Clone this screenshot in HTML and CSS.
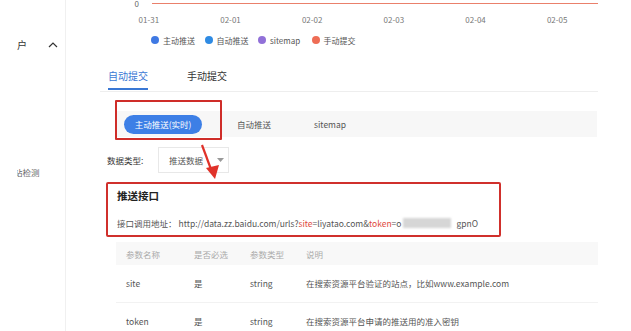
FILE: index.html
```html
<!DOCTYPE html>
<html lang="zh">
<head>
<meta charset="utf-8">
<link rel="stylesheet" href="styles.css">
</head>
<body>
<div class="app">
  <aside class="sidebar">
    <div class="nav-group">
      <span class="nav-title">户</span>
      <svg class="chev" width="10" height="6" viewBox="0 0 10 6"><polyline points="1,5 5,1 9,5" fill="none" stroke="#333" stroke-width="1.2"/></svg>
    </div>
    <div class="nav-item"><span class="clip"><span class="clip-inner">站检测</span></span></div>
  </aside>
  <main class="main">
    <section class="chart">
      <div class="chart-top">
        <span class="y-label">0</span>
        <span class="series-line"></span>
      </div>
      <div class="x-axis">
        <span>01-31</span><span>02-01</span><span>02-02</span><span>02-03</span><span>02-04</span><span>02-05</span>
      </div>
      <div class="legend">
        <span class="lg"><i class="dot d1"></i>主动推送</span>
        <span class="lg"><i class="dot d2"></i>自动推送</span>
        <span class="lg"><i class="dot d3"></i>sitemap</span>
        <span class="lg"><i class="dot d4"></i>手动提交</span>
      </div>
    </section>

    <nav class="tabs">
      <span class="tab active">自动提交</span>
      <span class="tab">手动提交</span>
    </nav>

    <div class="subtabs">
      <span class="pill">主动推送(实时)</span>
      <span class="sub sub2">自动推送</span>
      <span class="sub sub3">sitemap</span>
      <span class="mark-box"></span>
    </div>

    <div class="filter">
      <span class="filter-label">数据类型:</span>
      <span class="select">推送数据<svg class="caret" width="7" height="4" viewBox="0 0 7 4"><polygon points="0,0 7,0 3.5,4" fill="#999"/></svg></span>
      <svg class="arrow" width="24" height="40" viewBox="0 0 24 40"><line x1="2" y1="1" x2="12" y2="28" stroke="#e0322a" stroke-width="2.2"/><polygon points="6,24 19,21 15,35" fill="#e0322a"/></svg>
    </div>

    <section class="api-box">
      <h3 class="api-title">推送接口</h3>
      <p class="api-url">接口调用地址：<span class="url">http://data.zz.baidu.com/urls?<em>site</em>=liyatao.com&amp;<em>token</em>=o<span class="blur"></span>gpnO</span></p>
    </section>

    <table class="params">
      <thead>
        <tr><th>参数名称</th><th>是否必选</th><th>参数类型</th><th>说明</th></tr>
      </thead>
      <tbody>
        <tr><td>site</td><td>是</td><td>string</td><td>在搜索资源平台验证的站点，比如www.example.com</td></tr>
        <tr><td>token</td><td>是</td><td>string</td><td>在搜索资源平台申请的推送用的准入密钥</td></tr>
      </tbody>
    </table>
  </main>
</div>
</body>
</html>
```

FILE: styles.css
```css
* { box-sizing: border-box; }
html, body { margin: 0; padding: 0; background: #fff; }
body {
  font-family: "Noto Sans CJK SC", "Noto Sans", sans-serif;
  color: #333;
  width: 631px;
  height: 331px;
  overflow: hidden;
}
.app { display: flex; height: 331px; }

.sidebar {
  width: 66px;
  flex: none;
  border-right: 1px solid #f0f0f0;
  display: flex;
  flex-direction: column;
}
.nav-group {
  margin-top: 38px;
  height: 14px;
  display: flex;
  align-items: center;
  padding-left: 17px;
}
.nav-title { font-size: 10px; line-height: 14px; color: #333; }
.chev { margin-left: 21px; }
.nav-item { margin-top: 108px; padding-left: 17px; height: 14px; }
.clip { display: inline-block; width: 27px; overflow: hidden; white-space: nowrap; font-size: 8.5px; line-height: 14px; color: #666; }
.clip-inner { display: inline-block; margin-left: -3px; }

.main { flex: 1; padding: 0 33px 0 34px; min-width: 0; }

.chart { height: 52px; }
.chart-top { display: flex; align-items: center; height: 7px; }
.y-label { width: 52px; text-align: right; padding-right: 13px; font-size: 8px; line-height: 8px; color: #666; }
.series-line { flex: 1; height: 1px; background: #ea806b; }
.x-axis { display: flex; margin-left: 8px; margin-top: 7px; height: 12px; }
.x-axis span { width: 87px; text-align: center; font-size: 8px; line-height: 12px; color: #777; }
.legend { display: flex; margin-left: 51px; margin-top: 8px; height: 12px; align-items: center; }
.lg { display: inline-flex; align-items: center; font-size: 8px; color: #555; width: 53.5px; }
.dot { width: 8px; height: 8px; border-radius: 50%; margin-right: 4px; flex: none; }
.d1 { background: #3f79e3; }
.d2 { background: #2f8be3; }
.d3 { background: #9170d8; }
.d4 { background: #ee6d55; }

.tabs {
  margin-top: 17px;
  display: flex;
  padding-left: 8px;
  padding-bottom: 1px;
  border-bottom: 1px solid #eeeeee;
}
.tab { font-size: 10px; line-height: 14px; padding-bottom: 5px; border-bottom: 2px solid transparent; color: #333; }
.tab + .tab { margin-left: 39px; }
.tab.active { color: #3a78d4; border-bottom-color: #3a78d4; }

.subtabs {
  position: relative;
  margin: 19px 1px 0 15px;
  height: 26px;
  background: #f7f7f7;
  display: flex;
  align-items: center;
  padding-left: 9px;
}
.pill {
  height: 19px;
  width: 78px;
  border-radius: 10px;
  background: #3d7fe6;
  color: #fff;
  font-size: 8.5px;
  line-height: 19px;
  text-align: center;
}
.sub { font-size: 8.5px; color: #555; }
.sub2 { margin-left: 35px; }
.sub3 { margin-left: 43px; }
.mark-box {
  position: absolute;
  left: 0;
  top: -11px;
  width: 107px;
  height: 40px;
  border: 2px solid #cf2d29;
  border-radius: 1px;
}

.filter {
  position: relative;
  margin-top: 10px;
  height: 26px;
  display: flex;
  align-items: center;
  padding-left: 7px;
}
.filter-label { font-size: 8.5px; color: #333; width: 51px; }
.select {
  height: 26px;
  width: 71px;
  border: 1px solid #e8e8e8;
  display: flex;
  align-items: center;
  padding-left: 10px;
  font-size: 8.5px;
  color: #555;
}
.caret { margin-left: 14px; }
.arrow { position: absolute; left: 100px; top: -3px; }

.api-box {
  margin: 9px 0 0 6px;
  width: 395px;
  height: 55px;
  border: 2px solid #d0302c;
  border-radius: 2px;
  padding: 5px 9px 0;
}
.api-title { margin: 0; font-size: 10.5px; line-height: 14px; font-weight: 700; color: #222; }
.api-url { margin: 14px 0 0; font-size: 8.5px; line-height: 12px; color: #555; white-space: nowrap; }
.url { margin-left: 2px; }
.url em { font-style: normal; color: #e0483b; }
.blur {
  display: inline-block;
  width: 48px;
  height: 10px;
  vertical-align: -1px;
  margin: 0 5px 0 2px;
  background: #d6d6d6;
  filter: blur(1px);
}

.params {
  margin: 5px 0 0 16px;
  width: 482px;
  border-collapse: collapse;
  table-layout: fixed;
  font-size: 8.5px;
}
.params th {
  background: #f8f8f8;
  height: 23px;
  font-weight: 400;
  color: #aaa;
  text-align: left;
  padding: 0 0 0 10px;
}
.params th:nth-child(1) { width: 68px; }
.params th:nth-child(2) { width: 56px; }
.params th:nth-child(3) { width: 56px; }
.params td {
  height: 37px;
  padding: 0 0 0 10px;
  color: #555;
  border-bottom: 1px solid #f2f2f2;
  white-space: nowrap;
}
```
